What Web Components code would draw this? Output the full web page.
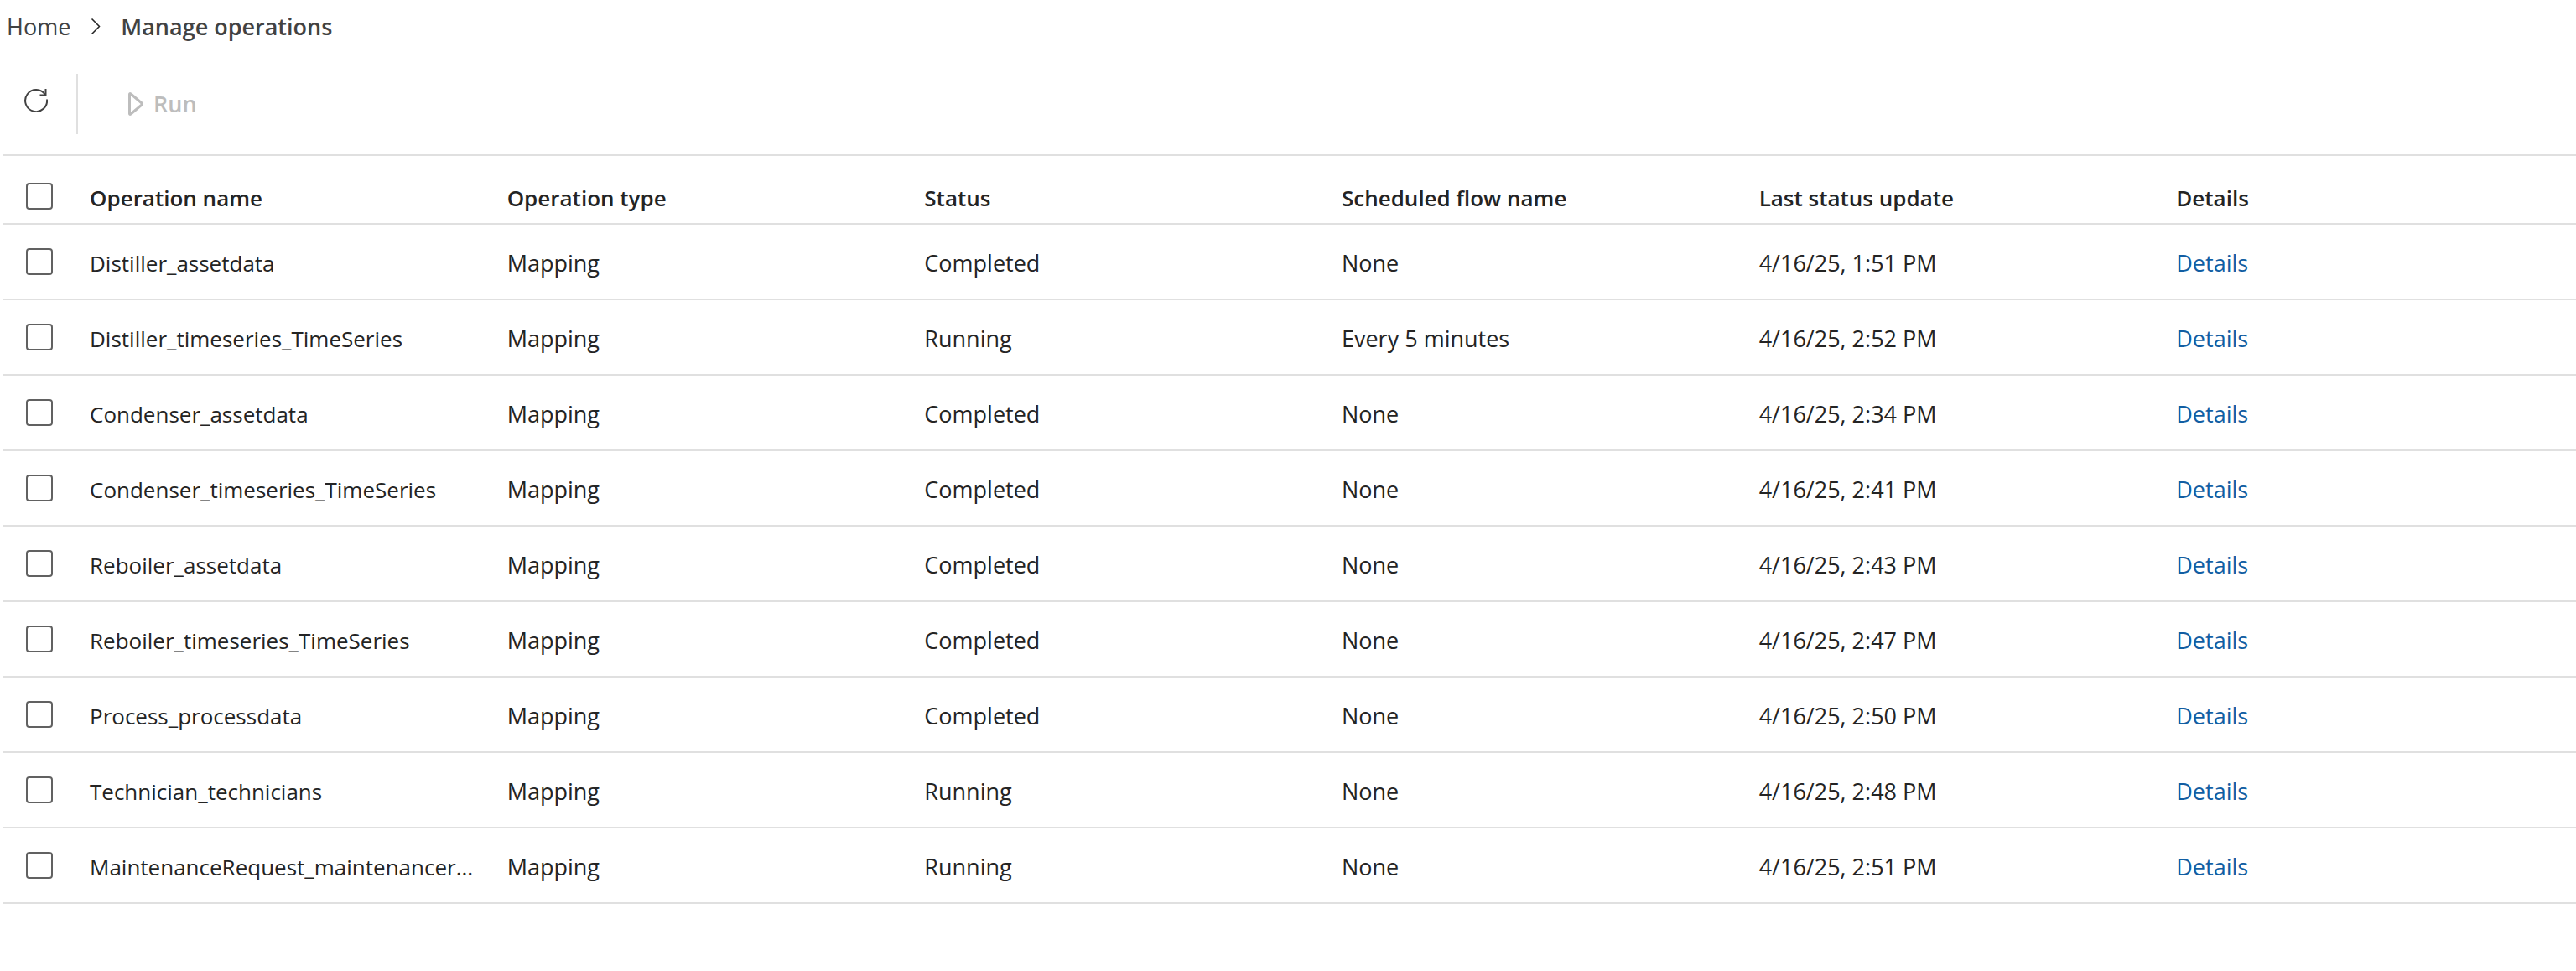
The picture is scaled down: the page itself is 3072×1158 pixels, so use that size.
<!DOCTYPE html>
<html lang="en">
<head>
<meta charset="utf-8">
<title>Manage operations</title>
<style>
  body {
    margin: 0;
    background: #fff;
    color: #242424;
    font: 27px/40px "Segoe UI", "Open Sans", "Noto Sans", sans-serif;
  }
</style>
</head>
<body>
<ops-page>
  <ops-breadcrumb slot="nav" current="Manage operations">
    <a href="#home">Home</a>
  </ops-breadcrumb>
  <ops-toolbar slot="toolbar"></ops-toolbar>
  <ops-table></ops-table>
</ops-page>

<script>
// small helper: build a <template> from a string
const tpl = (html) => {
  const t = document.createElement('template');
  t.innerHTML = html;
  return t;
};

// ===== Page shell =====
const pageTpl = tpl(/*html*/`
  <style>
    :host { display: flex; flex-direction: column; padding-left: 3px; }
    header { padding: 12px 5px 0; }
  </style>
  <header><slot name="nav"></slot></header>
  <slot name="toolbar"></slot>
  <main><slot></slot></main>
`);

class OpsPage extends HTMLElement {
  constructor() {
    super();
    this.attachShadow({ mode: 'open' }).append(pageTpl.content.cloneNode(true));
  }
}

// ===== Breadcrumb =====
const crumbTpl = tpl(/*html*/`
  <style>
    :host { display: block; color: #424242; }
    nav { display: flex; align-items: center; gap: 24px; }
    ::slotted(a) { color: inherit; text-decoration: none; }
    svg { display: block; width: 12px; height: 20px; }
    strong { font-weight: 600; }
  </style>
  <nav aria-label="Breadcrumb">
    <slot></slot>
    <svg viewBox="0 0 12 20" fill="none" stroke="#242424" stroke-width="1.500" aria-hidden="true">
      <path d="M1.500 .500 10.500 9.500 1.500 18.500"/>
    </svg>
    <strong aria-current="page"></strong>
  </nav>
`);

class OpsBreadcrumb extends HTMLElement {
  static get observedAttributes() { return ['current']; }
  constructor() {
    super();
    this.attachShadow({ mode: 'open' }).append(crumbTpl.content.cloneNode(true));
  }
  attributeChangedCallback(name, oldV, newV) {
    if (oldV === newV) return;
    this.shadowRoot.querySelector('strong').textContent = newV ?? '';
  }
}

// ===== Toolbar =====
const toolbarTpl = tpl(/*html*/`
  <style>
    :host { display: flex; padding: 36px 0 24px; }
    button {
      display: flex; align-items: center;
      border: 0; background: none; margin: 0; padding: 0;
      font: inherit; font-weight: 600; color: #424242;
      cursor: pointer;
    }
    button:disabled { color: #bdbdbd; cursor: default; }
    svg { display: block; }
    .refresh { padding: 0 34px 8px 26px; }
    .run { padding: 0 24px 0 60px; gap: 12px; }
    .sep { width: 2px; height: 72px; background: #e0e0e0; }
  </style>
  <button class="refresh" type="button" aria-label="Refresh">
    <svg width="28" height="28" viewBox="0 0 28 28" fill="none" stroke="currentColor" stroke-width="2" aria-hidden="true">
      <path d="M27 12.500A13 13 0 1 1 25 7"/>
      <path d="M25.500 0V7.500H18.500"/>
    </svg>
  </button>
  <div class="sep" role="separator"></div>
  <button class="run" type="button" disabled>
    <svg width="18" height="28" viewBox="0 0 18 28" fill="none" stroke="currentColor" stroke-width="3" stroke-linejoin="round" aria-hidden="true">
      <path d="M1.500 2.500V25.500Q1.500 27 3 26L16 15Q17 14 16 13L3 2Q1.500 1 1.500 2.500Z"/>
    </svg>
    Run
  </button>
`);

class OpsToolbar extends HTMLElement {
  constructor() {
    super();
    this.attachShadow({ mode: 'open' }).append(toolbarTpl.content.cloneNode(true));
  }
}

// ===== Checkbox =====
const checkTpl = tpl(/*html*/`
  <style>
    :host { display: block; width: 32px; height: 32px; }
    input {
      appearance: none;
      display: block; box-sizing: border-box;
      width: 32px; height: 32px; margin: 0;
      border: 2px solid #616161; border-radius: 4px;
      background: #fff;
    }
    input:checked { background: #115ea3; border-color: #115ea3; }
  </style>
  <input type="checkbox">
`);

class OpsCheck extends HTMLElement {
  static get observedAttributes() { return ['label']; }
  constructor() {
    super();
    this.attachShadow({ mode: 'open' }).append(checkTpl.content.cloneNode(true));
    this.input = this.shadowRoot.querySelector('input');
  }
  get checked() { return this.input.checked }
  set checked(v) { this.input.checked = v }
  attributeChangedCallback(name, oldV, newV) {
    this.input.setAttribute('aria-label', newV ?? '');
  }
}

// ===== Table =====
const OPERATIONS = [
  ['Distiller_assetdata', 'Completed', 'None', '4/16/25, 1:51 PM'],
  ['Distiller_timeseries_TimeSeries', 'Running', 'Every 5 minutes', '4/16/25, 2:52 PM'],
  ['Condenser_assetdata', 'Completed', 'None', '4/16/25, 2:34 PM'],
  ['Condenser_timeseries_TimeSeries', 'Completed', 'None', '4/16/25, 2:41 PM'],
  ['Reboiler_assetdata', 'Completed', 'None', '4/16/25, 2:43 PM'],
  ['Reboiler_timeseries_TimeSeries', 'Completed', 'None', '4/16/25, 2:47 PM'],
  ['Process_processdata', 'Completed', 'None', '4/16/25, 2:50 PM'],
  ['Technician_technicians', 'Running', 'None', '4/16/25, 2:48 PM'],
  ['MaintenanceRequest_maintenancer...', 'Running', 'None', '4/16/25, 2:51 PM'],
];

const tableTpl = tpl(/*html*/`
  <style>
    :host { display: block; }
    table {
      width: 100%;
      table-layout: fixed;
      border-collapse: separate; border-spacing: 0;
      border-top: 2px solid #e0e0e0;
    }
    th, td {
      box-sizing: border-box;
      height: 90px; padding: 4px 8px 0 21px;
      border-bottom: 2px solid #e0e0e0;
      text-align: left; vertical-align: middle;
      font-weight: 400;
      white-space: nowrap; overflow: hidden;
    }
    th { font-size: 26px; }
    thead th { height: 82px; padding-top: 20px; font-weight: 600; }
    .pick { width: 83px; padding: 0 0 0 28px; }
    thead .pick { padding-top: 16px; }
    a { color: #115ea3; text-decoration: none; }
    a:hover { text-decoration: underline; }
  </style>
  <table>
    <thead>
      <tr>
        <th class="pick"><ops-check label="Select all operations"></ops-check></th>
        <th scope="col">Operation name</th>
        <th scope="col">Operation type</th>
        <th scope="col">Status</th>
        <th scope="col">Scheduled flow name</th>
        <th scope="col">Last status update</th>
        <th scope="col">Details</th>
      </tr>
    </thead>
    <tbody></tbody>
  </table>
`);

class OpsTable extends HTMLElement {
  constructor() {
    super();
    this.attachShadow({ mode: 'open' }).append(tableTpl.content.cloneNode(true));
  }
  connectedCallback() {
    this.shadowRoot.querySelector('tbody').innerHTML = OPERATIONS.map(([name, status, flow, updated]) => `
      <tr>
        <td class="pick"><ops-check label="Select ${name}"></ops-check></td>
        <th scope="row">${name}</th>
        <td>Mapping</td>
        <td>${status}</td>
        <td>${flow}</td>
        <td>${updated}</td>
        <td><a href="#details">Details</a></td>
      </tr>`).join('');
    // header checkbox drives all the rows
    const [all, ...rows] = this.shadowRoot.querySelectorAll('ops-check');
    all.input.onchange = () => rows.forEach((r) => { r.checked = all.checked; });
  }
}

customElements.define('ops-check', OpsCheck);
customElements.define('ops-table', OpsTable);
customElements.define('ops-toolbar', OpsToolbar);
customElements.define('ops-breadcrumb', OpsBreadcrumb);
customElements.define('ops-page', OpsPage);
</script>
</body>
</html>
